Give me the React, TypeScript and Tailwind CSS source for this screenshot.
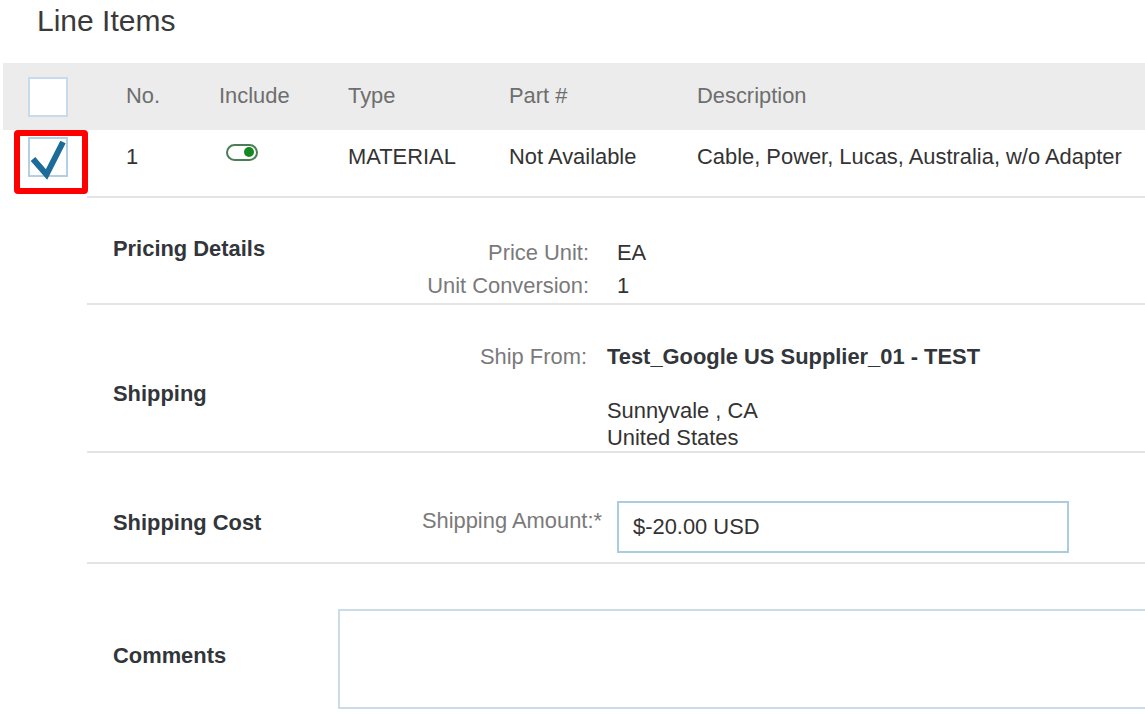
import React from "react";

function Toggle() {
  return (
    <div className="relative w-[32px] h-[17px] rounded-full border-[2.5px] border-[#4d7d57] bg-white mb-[10px] ml-[7px]">
      <div className="absolute right-[2px] top-[1.5px] w-[10px] h-[10px] rounded-full bg-[#15891f]" />
    </div>
  );
}

export default function App() {
  return (
    <div className="w-[1145px] h-[714px] overflow-hidden bg-white font-['Liberation_Sans',Arial,sans-serif] text-[21.9px] text-[#333333]">
      <div className="h-[63px] pl-[37px] pt-[1px] text-[30px] leading-[40px] text-[#3a3a3a]">Line Items</div>

      {/* Header */}
      <div className="ml-[3px] h-[67px] bg-[#ececec] pl-[25px] grid grid-cols-[98px_93px_129px_161px_188px_1fr] items-center text-[#6e6e6e]">
        <div className="w-[40px] h-[40px] bg-white border-2 border-[#c6dcec]" />
        <div>No.</div>
        <div>Include</div>
        <div>Type</div>
        <div>Part #</div>
        <div>Description</div>
      </div>

      {/* Row */}
      <div className="pl-[28px] pt-[7px] pb-[19px] grid grid-cols-[98px_93px_129px_161px_188px_1fr] items-center h-[40px] box-content">
        <div className="relative w-[40px] h-[40px]">
          <div className="w-[40px] h-[40px] bg-white border-2 border-[#b3cfe2]" />
          <svg className="absolute left-0 top-0 overflow-visible" width="40" height="40" viewBox="0 0 40 40">
            <polyline points="5,22 18.5,37.5 35,5" fill="none" stroke="#1c6b98" strokeWidth="6" strokeLinejoin="miter" />
          </svg>
          <div className="absolute left-[-14px] top-[-7px] w-[74px] h-[64px] border-[6px] border-[#ff0000] rounded-[4px]" />
        </div>
        <div>1</div>
        <div><Toggle /></div>
        <div>MATERIAL</div>
        <div>Not Available</div>
        <div className="whitespace-nowrap">Cable, Power, Lucas, Australia, w/o Adapter</div>
      </div>
      <div className="ml-[87px] h-[2px] bg-[#e4e4e4]" />

      <div className="ml-[87px]">
        {/* Pricing Details */}
        <div className="flex pl-[26px] pt-[38px] pb-[1px] border-b-2 border-[#e4e4e4]">
          <div className="w-[230px] font-bold leading-[26px] text-[#32363a]">Pricing Details</div>
          <div className="w-[246px] text-right text-[#7a7a7a] leading-[33px]">
            <div>Price Unit:</div>
            <div>Unit Conversion:</div>
          </div>
          <div className="pl-[28px] leading-[33px]">
            <div>EA</div>
            <div>1</div>
          </div>
        </div>

        {/* Shipping */}
        <div className="flex pl-[26px] pt-[38px] border-b-2 border-[#e4e4e4]">
          <div className="w-[230px] self-center font-bold leading-[27px] text-[#32363a] pb-[7px]">Shipping</div>
          <div className="w-[244px] text-right text-[#7a7a7a] leading-[27px]">Ship From:</div>
          <div className="pl-[20px] leading-[27px]">
            <div className="font-bold text-[#32363a]">Test_Google US Supplier_01 - TEST</div>
            <div>&nbsp;</div>
            <div>Sunnyvale , CA</div>
            <div>United States</div>
          </div>
        </div>

        {/* Shipping Cost */}
        <div className="flex pl-[26px] pt-[48px] pb-[9px] border-b-2 border-[#e4e4e4]">
          <div className="w-[230px] font-bold leading-[27px] text-[#32363a] pt-[8px]">Shipping Cost</div>
          <div className="w-[259px] text-right text-[#7a7a7a] leading-[27px] pt-[6px]">Shipping Amount:*</div>
          <div className="pl-[15px]">
            <div className="w-[452px] h-[52px] border-2 border-[#a9cddd] pl-[14px] flex items-center">$-20.00 USD</div>
          </div>
        </div>

        {/* Comments */}
        <div className="flex items-center pl-[26px] pt-[45px]">
          <div className="w-[225px] shrink-0 font-bold leading-[27px] text-[#32363a] pb-[8px]">Comments</div>
          <div className="w-[900px] shrink-0 h-[100px] border-2 border-[#c9dce7] bg-white" />
        </div>
      </div>
    </div>
  );
}
